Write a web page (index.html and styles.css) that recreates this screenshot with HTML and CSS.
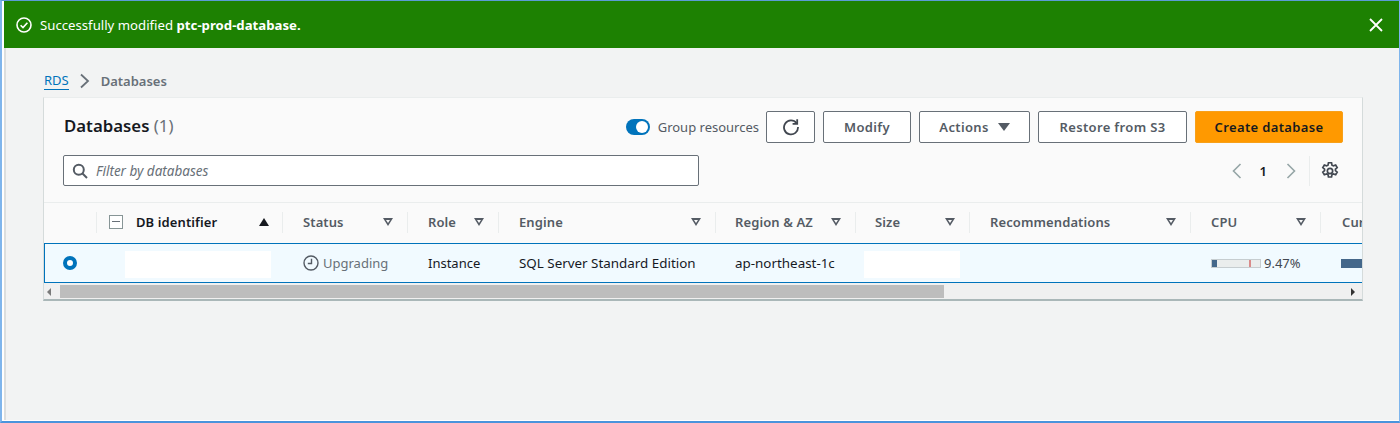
FILE: index.html
```html
<!DOCTYPE html>
<html lang="en">
<head>
    <meta charset="UTF-8">
    <title>Databases</title>
    <link rel="stylesheet" href="styles.css">
</head>
<body>
    <div class="page">
        <div class="flash">
            <div class="flash-msg">
                <svg class="flash-icon" width="16" height="16" viewBox="0 0 16 16"><circle cx="8" cy="8" r="7" /><path d="M4.6 8.2l2.4 2.4 4.4-4.8" /></svg>
                <span>Successfully modified <b>ptc-prod-database.</b></span>
            </div>
            <svg class="flash-close" width="16" height="16" viewBox="0 0 16 16"><path d="M2 2l12 12M14 2L2 14" /></svg>
        </div>

        <div class="content">
            <div class="crumbs">
                <a class="crumb-link">RDS</a>
                <svg class="crumb-sep" width="12" height="16" viewBox="0 0 12 16"><path d="M2 1.500l7 6.500-7 6.500" /></svg>
                <span class="crumb-current">Databases</span>
            </div>

            <div class="card">
                <div class="card-head">
                    <div class="title-row">
                        <h2>Databases <span class="count">(1)</span></h2>
                        <div class="actions">
                            <div class="group-toggle">
                                <span class="switch"></span>
                                <span>Group resources</span>
                            </div>
                            <button class="btn btn-refresh">
                                <svg width="18" height="18" viewBox="0 0 18 18"><path d="M14.6 5.2A7 7 0 1 0 16 9" /><path d="M15.2 1.2v4.6h-4.6" /></svg>
                            </button>
                            <button class="btn btn-modify">Modify</button>
                            <button class="btn btn-actions">Actions <span class="caret"></span></button>
                            <button class="btn btn-restore">Restore from S3</button>
                            <button class="btn btn-create">Create database</button>
                        </div>
                    </div>
                    <div class="filter-row">
                        <div class="filter">
                            <svg width="16" height="16" viewBox="0 0 16 16"><circle cx="6.8" cy="6.8" r="5" /><path d="M10.5 10.5L15 15" /></svg>
                            <span>Filter by databases</span>
                        </div>
                        <div class="pager">
                            <svg class="pager-arrow" width="12" height="16" viewBox="0 0 12 16"><path d="M9.500 1l-7 7 7 7" /></svg>
                            <span class="page-num">1</span>
                            <svg class="pager-arrow" width="12" height="16" viewBox="0 0 12 16"><path d="M2.500 1l7 7-7 7" /></svg>
                            <span class="pager-div"></span>
                            <svg class="gear" width="20" height="20" viewBox="0 0 18 18"><path d="M7.600 1.600h2.800l.4 2.100 1.300.7 2-.8 1.400 2.400-1.600 1.400v1.200l1.600 1.400-1.400 2.400-2-.8-1.300.7-.4 2.100H7.600l-.4-2.100-1.300-.7-2 .8-1.400-2.400 1.600-1.400V7.400L2.500 6l1.400-2.400 2 .8 1.300-.7z" /><circle cx="9" cy="9" r="2.400" /></svg>
                        </div>
                    </div>
                </div>

                <div class="table">
                    <div class="t-row t-header">
                        <div class="col col-radio"></div>
                        <div class="col col-id">
                            <span class="minus-box"></span>
                            <span class="id-label">DB identifier</span>
                            <span class="sort-up"></span>
                        </div>
                        <div class="col col-status"><span>Status</span><i class="sort"></i></div>
                        <div class="col col-role"><span>Role</span><i class="sort"></i></div>
                        <div class="col col-engine"><span>Engine</span><i class="sort"></i></div>
                        <div class="col col-region"><span>Region &amp; AZ</span><i class="sort"></i></div>
                        <div class="col col-size"><span>Size</span><i class="sort"></i></div>
                        <div class="col col-rec"><span>Recommendations</span><i class="sort"></i></div>
                        <div class="col col-cpu"><span>CPU</span><i class="sort"></i></div>
                        <div class="col col-cur"><span>Current</span></div>
                    </div>
                    <div class="t-row t-body">
                        <div class="col col-radio"><span class="radio"></span></div>
                        <div class="col col-id"><span class="mask mask-id"></span></div>
                        <div class="col col-status">
                            <svg class="clock" width="16" height="16" viewBox="0 0 16 16"><circle cx="8" cy="8" r="7" /><path d="M8.500 3.800v4.700H4.800" /></svg>
                            <span class="muted">Upgrading</span>
                        </div>
                        <div class="col col-role">Instance</div>
                        <div class="col col-engine">SQL Server Standard Edition</div>
                        <div class="col col-region">ap-northeast-1c</div>
                        <div class="col col-size"><span class="mask mask-size"></span></div>
                        <div class="col col-rec"></div>
                        <div class="col col-cpu">
                            <span class="meter"><span class="meter-fill"></span><span class="meter-mark"></span></span>
                            <span class="cpu-val">9.47%</span>
                        </div>
                        <div class="col col-cur"><span class="cur-bar"></span></div>
                    </div>
                </div>

                <div class="scrollbar">
                    <span class="scroll-left"></span>
                    <span class="scroll-thumb"></span>
                    <span class="scroll-right"></span>
                </div>
            </div>
        </div>
    </div>
</body>
</html>
```

FILE: styles.css
```css
* {
    box-sizing: border-box;
}
html, body {
    height: 100%;
}
body {
    margin: 0;
    overflow: hidden;
    padding: 0 0 1px 2px;
    background-color: #fff;
    border-top: 1px solid #5b9bd5;
    border-left: 2px solid #7fb5ec;
    border-right: 1px solid #7fb5ec;
    border-bottom: 2px solid #4a94dc;
    font-family: "Noto Sans", "Open Sans", sans-serif;
    font-size: 13px;
    color: #16191f;
}
svg {
    fill: none;
    stroke: currentColor;
    flex: none;
}
.page {
    height: 100%;
    background-color: #f2f3f3;
    border-left: 2px solid #dcdede;
}

/* flash banner */
.flash {
    display: flex;
    align-items: center;
    justify-content: space-between;
    height: 47px;
    margin-left: -2px;
    padding: 0 15px 0 12px;
    background-color: #1d8102;
    color: #fff;
    font-size: 13.2px;
}
.flash-msg {
    display: flex;
    align-items: center;
    gap: 8px;
}
.flash-icon {
    stroke-width: 1.6;
}
.flash-close {
    stroke-width: 1.8;
}

/* breadcrumbs */
.content {
    padding: 21px 0 0 37px;
}
.crumbs {
    display: flex;
    align-items: center;
    height: 24px;
    margin-bottom: 4px;
    padding-left: 1px;
}
.crumb-link {
    color: #0073bb;
    border-bottom: 1px solid #0073bb;
    line-height: 17px;
}
.crumb-sep {
    margin: 0 10px 0 10px;
    color: #687078;
    stroke-width: 1.8;
}
.crumb-current {
    font-weight: 600;
    color: #687078;
}

/* card */
.card {
    width: 1320px;
    background-color: #fafafa;
    border-left: 1px solid #d5dbdb;
    border-top: 1px solid #eaeded;
    border-right: 1px solid #d5dbdb;
    border-bottom: 2px solid #aab7b8;
    overflow: hidden;
}
.card-head {
    height: 104px;
    padding: 13px 19px 0 19px;
}
.title-row {
    display: flex;
    align-items: center;
    justify-content: space-between;
}
h2 {
    margin: 0;
    padding: 0 0 4px 1px;
    font-size: 16.8px;
    font-weight: 600;
}
.count {
    font-weight: 400;
    color: #687078;
}
.actions {
    display: flex;
    align-items: center;
    gap: 8px;
}
.group-toggle {
    display: flex;
    align-items: center;
    gap: 8px;
    margin-right: -1px;
    color: #545b64;
}
.switch {
    position: relative;
    width: 24px;
    height: 16px;
    border-radius: 8px;
    background-color: #0073bb;
}
.switch::after {
    content: "";
    position: absolute;
    top: 2px;
    right: 2px;
    width: 12px;
    height: 12px;
    border-radius: 50%;
    background-color: #fff;
}
.btn {
    display: flex;
    align-items: center;
    justify-content: center;
    height: 32px;
    padding: 0;
    border: 1px solid #687078;
    border-radius: 2px;
    background-color: #fff;
    color: #545b64;
    font-family: inherit;
    font-size: 13px;
    font-weight: 600;
    letter-spacing: 0.35px;
}
.btn-refresh {
    width: 49px;
}
.btn-refresh svg {
    stroke-width: 1.8;
    color: #414750;
}
.btn-modify {
    width: 88px;
}
.btn-actions {
    width: 111px;
    gap: 9px;
}
.caret {
    width: 0;
    height: 0;
    border-left: 6px solid transparent;
    border-right: 6px solid transparent;
    border-top: 8px solid #545b64;
}
.btn-restore {
    width: 149px;
}
.btn-create {
    width: 148px;
    border: 1px solid #f7a01a;
    background-color: #ff9900;
    color: #16191f;
}

/* filter + pager */
.filter-row {
    display: flex;
    align-items: center;
    justify-content: space-between;
    margin-top: 12px;
}
.filter {
    display: flex;
    align-items: center;
    gap: 8px;
    width: 636px;
    height: 31px;
    padding-left: 8px;
    border: 1px solid #687078;
    border-radius: 2px;
    background-color: #fff;
    color: #545b64;
    font-size: 13.5px;
    font-style: italic;
}
.filter svg {
    stroke-width: 2;
}
.filter span {
    color: #687078;
}
.pager {
    display: flex;
    align-items: center;
}
.pager-arrow {
    color: #95a5a6;
    stroke-width: 1.6;
}
.page-num {
    margin: 0 18px 0 17px;
    font-weight: 600;
    color: #16191f;
}
.pager-div {
    width: 1px;
    height: 30px;
    margin: 0 10px 0 12px;
    background-color: #eaeded;
}
.gear {
    margin-right: 3px;
    color: #414750;
    stroke-width: 1.5;
}

/* table */
.table {
    width: 1318px;
    overflow: hidden;
}
.t-row {
    display: flex;
}
.t-header {
    height: 41px;
    border-top: 1px solid #eaeded;
    font-weight: 600;
    color: #545b64;
    letter-spacing: 0.1px;
}
.t-body {
    height: 40px;
    border-top: 1px solid #0073bb;
    border-bottom: 1px solid #0073bb;
    border-left: 1px solid #0073bb;
    background-color: #f1faff;
    color: #16191f;
}
.col {
    display: flex;
    flex: none;
    align-items: center;
    padding-left: 20px;
}
.t-header .col {
    position: relative;
    justify-content: space-between;
    padding-right: 14px;
    padding-bottom: 2px;
}
.t-header .col + .col::before {
    content: "";
    position: absolute;
    left: 0;
    top: 9px;
    bottom: 10px;
    width: 1px;
    background-color: #eaeded;
}
.col-radio { width: 52px; }
.col-id { width: 186px; }
.col-status { width: 125px; }
.col-role { width: 91px; }
.col-engine { width: 217px; }
.col-region { width: 140px; }
.col-size { width: 114px; }
.col-rec { width: 221px; }
.col-cpu { width: 130px; }
.col-cur { width: 50px; }
.t-header .col-status,
.t-header .col-role,
.t-header .col-engine,
.t-header .col-rec,
.t-header .col-cpu,
.t-body .col-status,
.t-body .col-role,
.t-body .col-engine,
.t-body .col-cpu,
.t-body .col-cur {
    padding-left: 21px;
}
.t-header .col-cur {
    padding-left: 22px;
}
.t-body .col-radio {
    width: 51px;
    padding-left: 18px;
}
.t-body .col-engine,
.t-body .col-region {
    font-size: 13.4px;
}
.t-header .col-id {
    justify-content: flex-start;
    padding-left: 13px;
    color: #16191f;
}
.minus-box {
    position: relative;
    width: 14px;
    height: 14px;
    border: 1px solid #879596;
    background-color: #fff;
}
.minus-box::after {
    content: "";
    position: absolute;
    left: 2px;
    right: 2px;
    top: 5px;
    height: 1px;
    background-color: #687078;
}
.id-label {
    margin-left: 13px;
}
.sort-up {
    width: 0;
    height: 0;
    margin-left: auto;
    margin-right: -1px;
    border-left: 5px solid transparent;
    border-right: 5px solid transparent;
    border-bottom: 8px solid #16191f;
}
.sort {
    position: relative;
    flex: none;
    width: 0;
    height: 0;
    border-left: 5.5px solid transparent;
    border-right: 5.5px solid transparent;
    border-top: 8px solid #545b64;
}
.sort::after {
    content: "";
    position: absolute;
    left: -2.5px;
    top: -6.5px;
    width: 0;
    height: 0;
    border-left: 2.5px solid transparent;
    border-right: 2.5px solid transparent;
    border-top: 3px solid #fafafa;
}
.radio {
    width: 14px;
    height: 14px;
    border: 4px solid #0073bb;
    border-radius: 50%;
    background-color: #fff;
}
.mask {
    display: block;
    height: 27px;
    margin-top: 2px;
    background-color: #fff;
}
.t-body .col-id {
    padding-left: 29px;
}
.mask-id {
    width: 146px;
}
.mask-size {
    width: 96px;
}
.t-body .col-size {
    padding-left: 9px;
}
.clock {
    margin-right: 4px;
    color: #545b64;
    stroke-width: 1.4;
}
.muted {
    color: #687078;
}
.meter {
    position: relative;
    display: block;
    width: 50px;
    height: 9px;
    border: 1px solid #c6cdd0;
    background-color: #eaeded;
}
.meter-fill {
    position: absolute;
    left: 0;
    top: 0;
    bottom: 0;
    width: 5px;
    background-color: #44678a;
}
.meter-mark {
    position: absolute;
    right: 9px;
    top: 0;
    bottom: 0;
    width: 2px;
    background-color: #d98b8b;
}
.cpu-val {
    margin-left: 3px;
    color: #414750;
}
.cur-bar {
    display: block;
    width: 30px;
    height: 9px;
    background-color: #44678a;
}

/* horizontal scroll */
.scrollbar {
    display: flex;
    align-items: center;
    height: 16px;
    padding-top: 1px;
    background-color: #f0f0f0;
}
.scroll-left {
    width: 0;
    height: 0;
    margin-left: 3px;
    border-top: 4px solid transparent;
    border-bottom: 4px solid transparent;
    border-right: 4px solid #7a7a7a;
}
.scroll-thumb {
    width: 884px;
    height: 13px;
    margin-left: 9px;
    background-color: #bdbdbd;
}
.scroll-right {
    width: 0;
    height: 0;
    margin-left: auto;
    margin-right: 7px;
    border-top: 4px solid transparent;
    border-bottom: 4px solid transparent;
    border-left: 4px solid #333;
}
```
